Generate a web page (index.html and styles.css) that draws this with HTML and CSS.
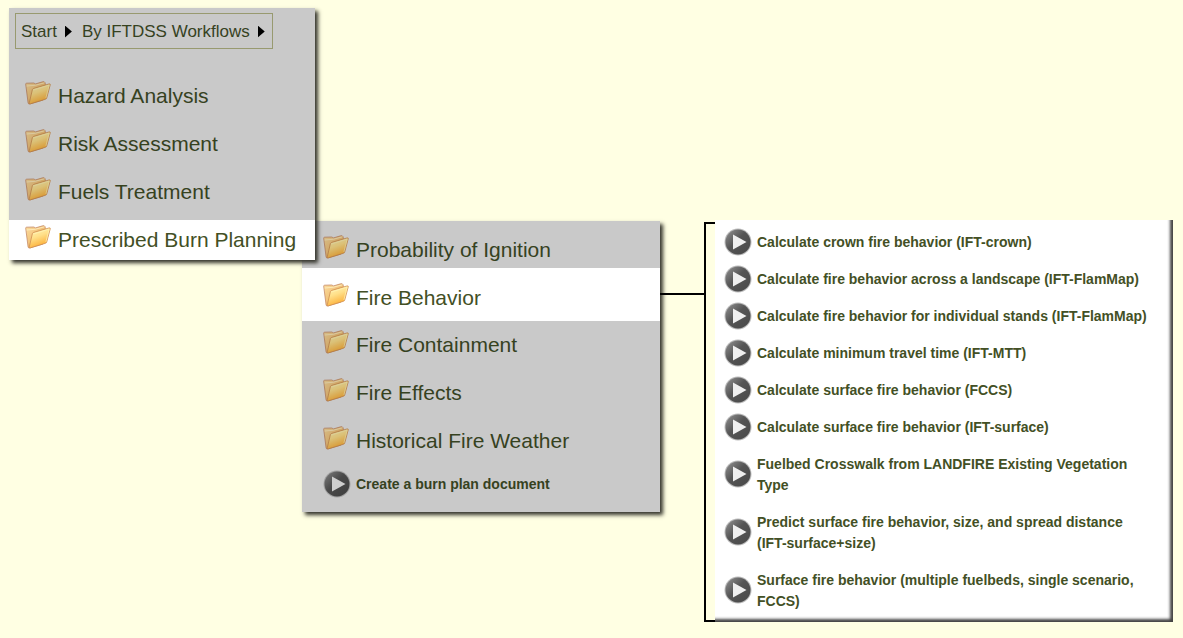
FILE: index.html
```html
<!DOCTYPE html>
<html lang="en">
<head>
<meta charset="utf-8">
<meta name="viewport" content="width=device-width, initial-scale=1">
<title>IFTDSS Workflows</title>
<link rel="stylesheet" href="styles.css">
</head>
<body>
<svg class="defs" aria-hidden="true">
  <defs>
    <linearGradient id="back" x1="0" y1="0" x2="1" y2="1"><stop offset="0" stop-color="#fbdda0"/><stop offset="1" stop-color="#e9a750"/></linearGradient>
    <linearGradient id="front" x1="0" y1="0" x2=".4" y2="1"><stop offset="0" stop-color="#fff7bd"/><stop offset=".5" stop-color="#ffe08a"/><stop offset="1" stop-color="#fcae35"/></linearGradient>
    <linearGradient id="disc" x1="0" y1="0" x2="1" y2="1"><stop offset="0" stop-color="#949494"/><stop offset=".45" stop-color="#555"/><stop offset="1" stop-color="#484848"/></linearGradient>
    <symbol id="folder" viewBox="0 0 26 24">
      <path d="M.7 3.2Q.6 2.3 1.6 2.2L8.7 2Q9.6 2 10.2 3L17.6.8Q19.6.3 20 1.6L20.4 3.6L18 19L4.7 23Q3.4 23.3 3.1 22Z" fill="url(#back)" stroke="#c58c69" stroke-width=".8"/>
      <path d="M1.5 5L10 4.3L19.5 1.8" fill="none" stroke="#fff0c4" stroke-width=".8"/>
      <path d="M7.4 8.6Q7.7 7.7 8.7 7.4L24.2 2.9Q25.6 2.6 25.2 4L21.7 17.1Q21.4 18 20.4 18.3L5.5 22.8Q4 23.2 4.3 21.8Z" fill="url(#front)" stroke="#d08f52" stroke-width=".8"/>
      <path d="M8.3 9L24.2 4.1L20.9 16.9" fill="none" stroke="#fff4b8" stroke-width=".7"/>
    </symbol>
    <symbol id="play" viewBox="0 0 28 28">
      <circle cx="14" cy="14" r="13.5" fill="#bbb"/>
      <circle cx="14" cy="14" r="12.5" fill="url(#disc)"/>
      <path d="M9 6.5V21.5L22.5 14Z" fill="#efefef"/>
    </symbol>
  </defs>
</svg>
<main class="workflow">
  <section class="panel start">
    <nav class="crumbs" aria-label="Breadcrumb">
      <a href="#">Start</a><i class="arrow"></i>
      <a href="#">By IFTDSS Workflows</a><i class="arrow"></i>
    </nav>
    <nav class="folders" aria-label="Workflows">
      <a class="folder" href="#"><svg><use href="#folder"/></svg>Hazard Analysis</a>
      <a class="folder" href="#"><svg><use href="#folder"/></svg>Risk Assessment</a>
      <a class="folder" href="#"><svg><use href="#folder"/></svg>Fuels Treatment</a>
      <a class="folder active" href="#"><svg><use href="#folder"/></svg>Prescribed Burn Planning</a>
    </nav>
  </section>
  <nav class="panel topics" aria-label="Prescribed Burn Planning">
    <a class="folder first" href="#"><svg><use href="#folder"/></svg>Probability of Ignition</a>
    <a class="folder active" href="#"><svg><use href="#folder"/></svg>Fire Behavior</a>
    <a class="folder" href="#"><svg><use href="#folder"/></svg>Fire Containment</a>
    <a class="folder" href="#"><svg><use href="#folder"/></svg>Fire Effects</a>
    <a class="folder" href="#"><svg><use href="#folder"/></svg>Historical Fire Weather</a>
    <a class="task" href="#"><svg><use href="#play"/></svg><span>Create a burn plan document</span></a>
  </nav>
  <div class="connector"><div class="line"></div><div class="bracket"></div></div>
  <nav class="tasks" aria-label="Fire Behavior">
    <a class="task" href="#"><svg><use href="#play"/></svg><span>Calculate crown fire behavior (IFT-crown)</span></a>
    <a class="task" href="#"><svg><use href="#play"/></svg><span>Calculate fire behavior across a landscape (IFT-FlamMap)</span></a>
    <a class="task" href="#"><svg><use href="#play"/></svg><span>Calculate fire behavior for individual stands (IFT-FlamMap)</span></a>
    <a class="task" href="#"><svg><use href="#play"/></svg><span>Calculate minimum travel time (IFT-MTT)</span></a>
    <a class="task" href="#"><svg><use href="#play"/></svg><span>Calculate surface fire behavior (FCCS)</span></a>
    <a class="task" href="#"><svg><use href="#play"/></svg><span>Calculate surface fire behavior (IFT-surface)</span></a>
    <a class="task" href="#"><svg><use href="#play"/></svg><span>Fuelbed Crosswalk from LANDFIRE Existing Vegetation Type</span></a>
    <a class="task" href="#"><svg><use href="#play"/></svg><span>Predict surface fire behavior, size, and spread distance <b>(IFT-surface+size)</b></span></a>
    <a class="task" href="#"><svg><use href="#play"/></svg><span>Surface fire behavior (multiple fuelbeds, single scenario, FCCS)</span></a>
  </nav>
</main>
</body>
</html>
```
FILE: styles.css
```css
* { box-sizing: border-box; }

body {
  margin: 0;
  background: #ffffe3;
  color: #36421f;
  font-family: "Liberation Sans", Arial, sans-serif;
}

a { color: inherit; text-decoration: none; }

.defs { position: absolute; width: 0; height: 0; }

.workflow {
  display: grid;
  grid-template-columns: 306fr 345fr 55fr 458fr;
  align-items: start;
  padding: 8px 10px 16px 9px;
}

.panel {
  background: #c9c9c9;
  box-shadow: 3px 3px 4px #33332b;
}

.start {
  position: relative;
  z-index: 1;
  padding-top: 5px;
}

.crumbs {
  display: flex;
  align-items: center;
  width: fit-content;
  height: 36px;
  margin-left: 6px;
  padding: 1px 7px 0 5px;
  border: 1px solid #989a70;
  font-size: 17px;
}

.arrow {
  width: 7px;
  height: 12px;
  margin: 0 10px 0 8px;
  background: #000;
  clip-path: polygon(0 0, 100% 50%, 0 100%);
}

.arrow:last-child { margin-right: 0; }

.folders {
  display: grid;
  gap: 8px;
  padding-top: 27px;
}

.folder {
  display: flex;
  align-items: center;
  gap: 7px;
  font-size: 21px;
  white-space: nowrap;
}

.folder svg {
  flex: none;
  width: 26px;
  height: 24px;
  margin-bottom: 6px;
  filter: brightness(0.86);
}

.start .folder { height: 40px; padding-left: 16px; }

.active { background: #fff; color: #435025; }

.folder.active svg { filter: none; }

.topics {
  margin: 213px 0 0 -13px;
  padding-bottom: 10px;
}

.topics .folder { height: 48px; padding-left: 21px; }
.topics .first { height: 47px; padding-top: 10px; }
.topics .active { height: 53px; padding-top: 6px; }

.task {
  display: flex;
  align-items: center;
  gap: 5px;
  font-size: 14px;
  font-weight: bold;
  line-height: 21px;
}

.task span { padding: 9px 0 7px; }

.task b { white-space: nowrap; }

.task svg { flex: none; width: 28px; height: 28px; }

.topics .task { padding-left: 21px; }
.topics .task svg { filter: brightness(0.86); }

.connector {
  display: grid;
  grid-template-columns: 1fr 11px;
  align-self: stretch;
  padding-top: 214px;
  position: relative;
  z-index: 1;
}

.line { height: 2px; margin-top: 71px; background: #000; }

.bracket { border: 2px solid #000; border-right: 0; }

.tasks {
  margin-top: 212px;
  padding: 3px 20px 3px 9px;
  background: #fff;
  box-shadow: inset -3px -3px 3px #444;
  color: #435025;
}
```
